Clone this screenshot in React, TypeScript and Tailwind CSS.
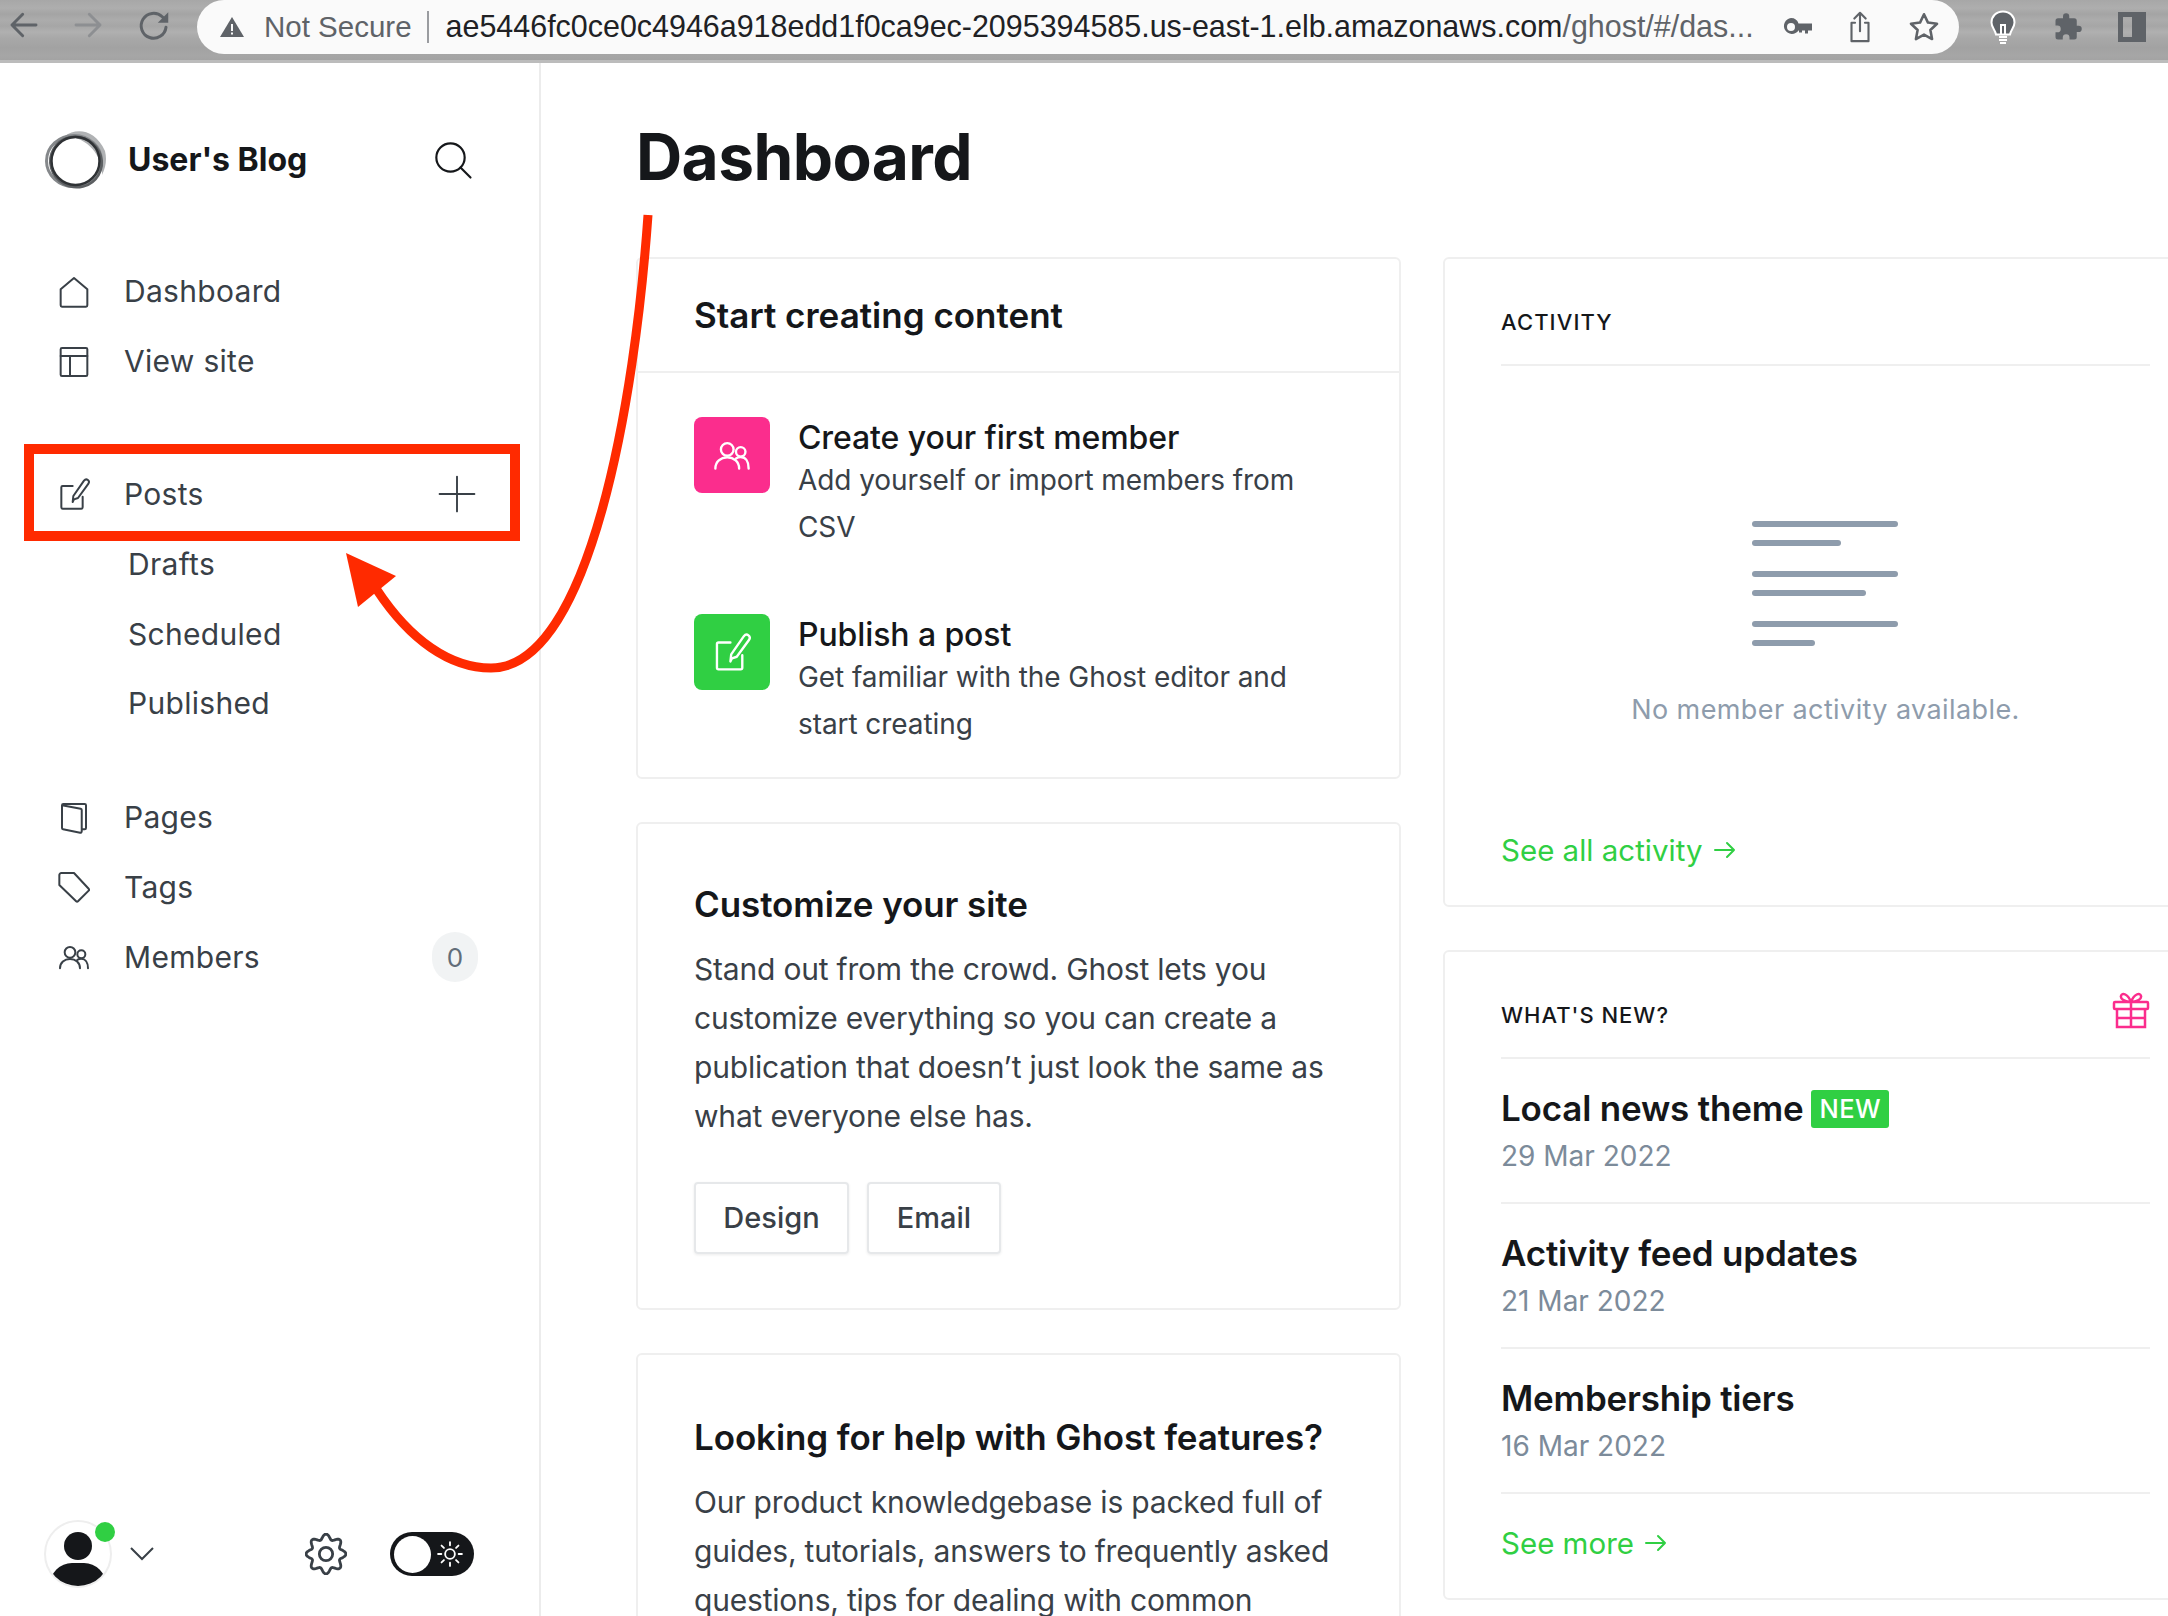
import React from "react";

// gear outline: eight rounded lobes around the centre
const gearPath = Array.from({ length: 96 }, (_, i) => {
  const a = (i / 96) * Math.PI * 2;
  const r = 9.9 + 1.5 * Math.cos(8 * a);
  return `${i === 0 ? "M" : "L"}${(12 + r * Math.cos(a)).toFixed(2)} ${(12 + r * Math.sin(a)).toFixed(2)}`;
}).join(" ") + "Z";

const Nav = ({ icon, label, children }: { icon?: React.ReactNode; label: string; children?: React.ReactNode }) => (
  <div className="flex h-[69.8px] items-center pl-[58px] pr-[61px] text-[30px] tracking-[0.3px] text-[#394047]">
    {icon && <span className="mr-[34px] flex w-8 justify-center">{icon}</span>}
    <span className={icon ? "" : "pl-[70px]"}>{label}</span>
    <span className="ml-auto">{children}</span>
  </div>
);

const Stroke = ({ children, className, size = 32, sw = 1.5 }: { children: React.ReactNode; className?: string; size?: number; sw?: number }) => (
  <svg width={size} height={size} viewBox="0 0 24 24" fill="none" stroke="currentColor" strokeWidth={sw} strokeLinecap="round" strokeLinejoin="round" className={className}>
    {children}
  </svg>
);

const MembersIcon = (p: { size?: number; className?: string }) => (
  <Stroke {...p}>
    <circle cx="9" cy="8.5" r="4" />
    <circle cx="17.5" cy="10" r="3" />
    <path d="M1.5 20.5c0-4.2 3.3-7 7.5-7s7.5 2.8 7.5 7" />
    <path d="M14.5 14.2c.9-.6 1.9-.9 3-.9 2.9 0 5 2.6 5 7.2" />
  </Stroke>
);

const PostIcon = (p: { size?: number; className?: string }) => (
  <Stroke {...p}>
    <path d="M11 6H3.5a1 1 0 0 0-1 1v15a1 1 0 0 0 1 1h14a1 1 0 0 0 1-1v-8" />
    <path d="M12 16l-1 2 .5-4.5L19.5 2c.8-1 2-1.2 2.900-.5s1 1.900.3 2.900L15 15z" />
  </Stroke>
);

const Arrow = () => (
  <svg width="24" height="20" viewBox="0 0 24 20" fill="none" stroke="currentColor" strokeWidth="2" strokeLinecap="round" strokeLinejoin="round">
    <path d="M2 10h19M14 3l7 7-7 7" />
  </svg>
);

const Toolbar = () => (
  <div className="flex h-[63px] items-start bg-[linear-gradient(180deg,#a7a7a7_0px,#aeaeae_8px,#a4a4a4_14px,#acacac_20px,#a6a6a6_26px,#b0b0b0_32px,#a8a8a8_38px,#a2a2a2_48px,#a6a6a6_56px,#a3a3a3_60px,#bcbcbc_60px,#bcbcbc_63px)] font-['Liberation_Sans',sans-serif]">
    <div className="flex h-[50px] w-[197px] shrink-0 items-center gap-[32px] pl-[8px] text-[#5f6368]">
      <Stroke size={32} sw={2.2}><path d="M21 12H3M11 4l-8 8 8 8" /></Stroke>
      <Stroke size={32} sw={2.2} className="text-[#8d8f92]"><path d="M3 12h18M13 4l8 8-8 8" /></Stroke>
      <Stroke size={36} sw={2}>
        <path d="M20 13.500A8.300 8.300 0 1 1 17.500 6.500L20 9" />
        <path d="M21.500 3.500v7h-7z" fill="currentColor" stroke="none" />
      </Stroke>
    </div>
    <div className="flex h-[54px] w-[1762px] shrink-0 items-center rounded-r-[27px] rounded-l-[27px] bg-[#fafafa] pl-[22px] pr-[18px]">
      <svg width="26" height="24" viewBox="0 0 26 24" className="shrink-0"><path d="M13 2 25 22H1z" fill="#5f6368" /><path d="M12 9h2v7h-2zM12 17.500h2v2h-2z" fill="#fafafa" /></svg>
      <span className="ml-[19px] text-[29.5px] text-[#5f6368]">Not Secure</span>
      <span className="ml-[15px] h-[32px] w-[2px] bg-[#9a9ca0]" />
      <span className="ml-[17px] whitespace-nowrap text-[30.45px] text-[#202124]">
        ae5446fc0ce0c4946a918edd1f0ca9ec-2095394585.us-east-1.elb.amazonaws.com<span className="text-[#5f6368]">/ghost/#/das...</span>
      </span>
      <div className="ml-auto flex items-center gap-[30px] text-[#5f6368]">
        <svg width="30" height="22" viewBox="0 0 30 22" fill="currentColor"><path fillRule="evenodd" d="M8 2a8 8 0 0 1 7.500 5.500H29v7h-4v3h-3v-3h-3v2h-3v-2h-.500A8 8 0 1 1 8 2zm0 5a3.500 3.500 0 1 0 0 8 3.500 3.500 0 0 0 0-8z" /></svg>
        <Stroke size={34} sw={1.5}><path d="M12 15V2M8 6l4-4 4 4M8.500 9H6v13h12V9h-2.500" /></Stroke>
        <Stroke size={34} sw={1.8}><path d="m12 3 2.800 5.900 6.400.8-4.700 4.400 1.200 6.400L12 17.400l-5.700 3.100 1.200-6.400L2.800 9.700l6.400-.8z" /></Stroke>
      </div>
    </div>
    <div className="flex h-[54px] flex-1 items-center justify-between pl-[30px] pr-[22px] text-[#5f6368]">
      <svg width="28" height="34" viewBox="0 0 28 34"><path d="M14 1.500C7 1.500 2.500 6.500 2.500 12.500c0 5 3.500 7 4.500 12h14c1-5 4.500-7 4.500-12 0-6-4.500-11-11.500-11z" fill="#5f6368" stroke="#fff" strokeWidth="2" /><path d="M10 27h8M10 30h8M11 33h6M12 24v-9h4v9" stroke="#fff" strokeWidth="2" fill="none" /></svg>
      <svg width="30" height="30" viewBox="0 0 24 24" fill="currentColor"><path d="M20.500 11H19V7a2 2 0 0 0-2-2h-4V3.500a2.500 2.500 0 0 0-5 0V5H4a2 2 0 0 0-2 2v3.800h1.500a2.700 2.700 0 0 1 0 5.400H2V20a2 2 0 0 0 2 2h3.800v-1.500a2.700 2.700 0 0 1 5.400 0V22H17a2 2 0 0 0 2-2v-4h1.500a2.500 2.500 0 0 0 0-5z" /></svg>
      <span className="flex h-[30px] w-[28px] justify-end border-[5px] border-[#5f6368]"><span className="h-full w-[9px] bg-[#5f6368]" /></span>
    </div>
  </div>
);

const Sidebar = () => (
  <aside className="flex h-full w-[541px] shrink-0 flex-col border-r-2 border-[#ececec] pb-[28px]">
    <div className="mt-[67px] flex h-[60px] items-center pl-[45px] pr-[66px]">
      <svg width="62" height="62" viewBox="0 0 62 62" fill="none">
        <path d="M20 7C30-1 50-1 60 22 62 30 61 38 57 46 58 30 45 8 20 7z" fill="#b0b2b4" />
        <ellipse cx="29" cy="32" rx="27.500" ry="25.500" strokeWidth="3" stroke="#85888b" />
        <ellipse cx="31" cy="33" rx="26" ry="25" strokeWidth="2.500" stroke="#5c5f62" transform="rotate(30 31 33)" />
        <ellipse cx="30.500" cy="32" rx="24" ry="24" strokeWidth="2.500" stroke="#2f3235" />
      </svg>
      <span className="ml-[21px] text-[32px] font-bold text-[#15171a]">User's Blog</span>
      <Stroke size={40} sw={1.300} className="ml-auto text-[#15171a]">
        <circle cx="10.500" cy="10.500" r="8.500" />
        <path d="m16.500 16.500 6 6" />
      </Stroke>
    </div>

    <nav className="mt-[67px]">
      <Nav label="Dashboard" icon={<Stroke><path d="M12 1.500 2 10v12a1 1 0 0 0 1 1h18a1 1 0 0 0 1-1V10z" /></Stroke>} />
      <Nav label="View site" icon={<Stroke><rect x="2" y="1.500" width="20" height="21" rx="1" /><path d="M2 7.500h20M9 7.500v15" /></Stroke>} />
    </nav>

    <nav className="mt-[63px]">
      <Nav label="Posts" icon={<PostIcon />}>
        <Stroke size={38} sw={1.200} className="mr-[2px]"><path d="M12 1v22M1 12h22" /></Stroke>
      </Nav>
      <Nav label="Drafts" />
      <Nav label="Scheduled" />
      <Nav label="Published" />
    </nav>

    <nav className="mt-[44px]">
      <Nav label="Pages" icon={<Stroke><path d="M3 2.500l14 2.500a1 1 0 0 1 .8 1V22a1 1 0 0 1-1.200 1L3.800 20.500a1 1 0 0 1-.8-1zM3 2.500a1 1 0 0 1 1-1h16a1 1 0 0 1 1 1v17a1 1 0 0 1-1 1h-2.200" /></Stroke>} />
      <Nav label="Tags" icon={<Stroke><path d="M1 3a1.500 1.500 0 0 1 1.500-1.500h9.500L23 13.300a1 1 0 0 1 0 1.400l-8 8a1 1 0 0 1-1.400 0L1 10.500z" /></Stroke>} />
      <Nav label="Members" icon={<MembersIcon />}>
        <span className="flex h-[50px] w-[46px] items-center justify-center rounded-full bg-[#f1f3f4] text-[26px] text-[#626d79]">0</span>
      </Nav>
    </nav>

    <div className="mt-auto flex items-center pl-[44px] pr-[65px]">
      <div className="relative h-[68px] w-[68px]">
        <div className="flex h-full w-full flex-col items-center overflow-hidden rounded-full border-2 border-[#eeeeee] pt-[10px]">
          <span className="h-[28px] w-[28px] shrink-0 rounded-full bg-[#15171a]" />
          <span className="mt-[3px] h-[44px] w-[56px] shrink-0 rounded-full bg-[#15171a]" />
        </div>
        <span className="absolute right-[-3px] top-[2px] h-[20px] w-[20px] rounded-full bg-[#30cf43]" />
      </div>
      <svg width="26" height="16" viewBox="0 0 26 16" fill="none" stroke="#394047" strokeWidth="2" className="ml-[17px]"><path d="m2 2 11 11L24 2" /></svg>
      <Stroke size={42} sw={1.600} className="ml-auto text-[#394047]">
        <circle cx="12" cy="12" r="3.800" />
        <path d={gearPath} />
      </Stroke>
      <div className="ml-[43px] flex h-[44px] w-[84px] items-center rounded-full bg-[#15171a] pl-[4px]">
        <span className="h-[37px] w-[37px] rounded-full bg-white" />
        <Stroke size={26} sw={1.700} className="ml-[6px] text-white">
          <circle cx="12" cy="12" r="4.500" />
          <path d="M12 1v3M12 20v3M1 12h3M20 12h3M4.200 4.200l2.200 2.200M17.600 17.600l2.200 2.200M4.200 19.800l2.200-2.200M17.600 6.400l2.200-2.200" />
        </Stroke>
      </div>
    </div>
  </aside>
);

const Card = ({ className, children }: { className?: string; children: React.ReactNode }) => (
  <section className={`shrink-0 rounded-[6px] border-2 border-[#efefef] bg-white ${className ?? ""}`}>{children}</section>
);

const Task = ({ color, icon, title, lines }: { color: string; icon: React.ReactNode; title: string; lines: string }) => (
  <div className="flex">
    <span className={`flex h-[76px] w-[76px] shrink-0 items-center justify-center rounded-[8px] text-white ${color}`}>{icon}</span>
    <div className="ml-[28px] w-[540px]">
      <h4 className="text-[32px] leading-[42px] font-medium tracking-[-0.1px] text-[#15171a]">{title}</h4>
      <p className="mt-[-2px] text-[28px] leading-[46.5px] tracking-[-0.08px] text-[#394047]">{lines}</p>
    </div>
  </div>
);

const NewsItem = ({ title, date, isNew }: { title: string; date: string; isNew?: boolean }) => (
  <div className="flex h-[145px] flex-col justify-center border-b-2 border-[#efefef] pt-[3px]">
    <h4 className="flex items-center text-[35px] leading-[46px] font-semibold tracking-[-0.2px] text-[#15171a]">
      {title}
      {isNew && <span className="mt-[2px] ml-[8px] flex h-[38px] items-center rounded-[3px] bg-[#30cf43] px-[8px] text-[25.5px] font-medium tracking-[0.4px] text-white">NEW</span>}
    </h4>
    <p className="mt-[2px] text-[28px] leading-[47px] text-[#7c8b9a]">{date}</p>
  </div>
);

export default function App() {
  return (
    <div className="relative h-[1616px] w-[2168px] overflow-hidden bg-white font-['Inter',sans-serif]">
      <Toolbar />
      <div className="flex h-[1553px]">
        <Sidebar />
        <main className="min-w-0 flex-1 pl-[95px]">
          <h1 className="mt-[54px] h-[85px] text-[64px] leading-[80px] font-bold tracking-[-0.6px] text-[#15171a]">Dashboard</h1>
          <div className="mt-[55px] flex gap-[42px]">
            <div className="flex w-[765px] shrink-0 flex-col gap-[43px]">
              <Card className="h-[522px]">
                <div className="flex h-[114px] items-center border-b-2 border-[#efefef] px-[56px]">
                  <h3 className="text-[35px] font-semibold text-[#15171a]">Start creating content</h3>
                </div>
                <div className="flex flex-col gap-[64px] px-[56px] pt-[44px]">
                  <Task color="bg-[#fb2d8d]" icon={<MembersIcon size={38} />} title="Create your first member" lines="Add yourself or import members from CSV" />
                  <Task color="bg-[#30cf43]" icon={<PostIcon size={38} />} title="Publish a post" lines="Get familiar with the Ghost editor and start creating" />
                </div>
              </Card>
              <Card className="h-[488px] px-[56px] pt-[55px]">
                <h3 className="text-[35px] leading-[50px] font-semibold tracking-[-0.1px] text-[#15171a]">Customize your site</h3>
                <p className="mt-[16px] w-[660px] text-[30px] leading-[49px] tracking-[-0.2px] text-[#394047]">
                  Stand out from the crowd. Ghost lets you customize everything so you can create a publication that doesn’t just look the same as what everyone else has.
                </p>
                <div className="mt-[41px] flex gap-[18px]">
                  <button className="h-[72px] w-[155px] rounded-[4px] border-2 border-[#e6e8ea] text-[29px] font-medium text-[#394047] shadow-[0_1px_3px_rgba(0,0,0,0.08)]">Design</button>
                  <button className="h-[72px] w-[134px] rounded-[4px] border-2 border-[#e6e8ea] text-[29px] font-medium text-[#394047] shadow-[0_1px_3px_rgba(0,0,0,0.08)]">Email</button>
                </div>
              </Card>
              <Card className="h-[500px] px-[56px] pt-[57px]">
                <h3 className="text-[35px] leading-[50px] font-semibold tracking-[-0.1px] text-[#15171a]">Looking for help with Ghost features?</h3>
                <p className="mt-[16px] w-[660px] text-[30px] leading-[49px] tracking-[-0.2px] text-[#394047]">
                  Our product knowledgebase is packed full of guides, tutorials, answers to frequently asked questions, tips for dealing with common
                </p>
              </Card>
            </div>

            <div className="flex w-[764px] shrink-0 flex-col gap-[43px]">
              <Card className="flex h-[650px] flex-col pl-[56px] pr-[55px]">
                <div className="flex h-[107px] items-center border-b-2 border-[#efefef] pt-[22px] text-[22px] font-medium tracking-[1.1px] text-[#15171a]">ACTIVITY</div>
                <div className="mt-[155px] ml-[251px] flex w-[146px] flex-col">
                  <span className="h-[6px] w-[146px] rounded-full bg-[#8e9cac]" />
                  <span className="mt-[13px] h-[6px] w-[89px] rounded-full bg-[#8e9cac]" />
                  <span className="mt-[25px] h-[6px] w-[146px] rounded-full bg-[#8e9cac]" />
                  <span className="mt-[13px] h-[6px] w-[114px] rounded-full bg-[#8e9cac]" />
                  <span className="mt-[25px] h-[6px] w-[146px] rounded-full bg-[#8e9cac]" />
                  <span className="mt-[13px] h-[6px] w-[63px] rounded-full bg-[#8e9cac]" />
                </div>
                <p className="mt-[44px] text-center text-[27px] leading-[40px] tracking-[0.4px] text-[#8e9cac]">No member activity available.</p>
                <a className="mt-[100px] flex items-center gap-[10px] text-[29.5px] leading-[40px] text-[#30cf43]">See all activity <Arrow /></a>
              </Card>
              <Card className="h-[650px] pl-[56px] pr-[55px]">
                <div className="flex h-[107px] items-center justify-between border-b-2 border-[#efefef] pt-[22px] text-[22px] font-medium tracking-[1px] text-[#15171a]">
                  WHAT'S NEW?
                  <svg width="38" height="40" viewBox="0 0 38 40" fill="none" stroke="#fb2d8d" strokeWidth="2.500" className="mb-[12px]">
                    <rect x="2" y="12" width="34" height="7" rx="1" />
                    <path d="M5 19v18h28V19M19 12v25M5 28h28M19 12c-3-8-9-10-10-6-.8 3 4 6 10 6zm0 0c3-8 9-10 10-6 .8 3-4 6-10 6z" />
                  </svg>
                </div>
                <NewsItem title="Local news theme" date="29 Mar 2022" isNew />
                <NewsItem title="Activity feed updates" date="21 Mar 2022" />
                <NewsItem title="Membership tiers" date="16 Mar 2022" />
                <a className="mt-[29px] flex items-center gap-[10px] text-[29.5px] leading-[40px] text-[#30cf43]">See more <Arrow /></a>
              </Card>
            </div>
          </div>
        </main>
      </div>

      {/* red annotation drawn over the page */}
      <div className="absolute left-[24px] top-[444px] h-[97px] w-[496px] border-[10px] border-[#ff2a00]" />
      <svg className="absolute left-0 top-0" width="700" height="700" viewBox="0 0 700 700" fill="none">
        <path d="M648 215C635 400 590 668 491 668 450 668 410 640 377 590" stroke="#ff2a00" strokeWidth="9" />
        <path d="M346 553 396 576 358 607z" fill="#ff2a00" />
      </svg>
    </div>
  );
}
